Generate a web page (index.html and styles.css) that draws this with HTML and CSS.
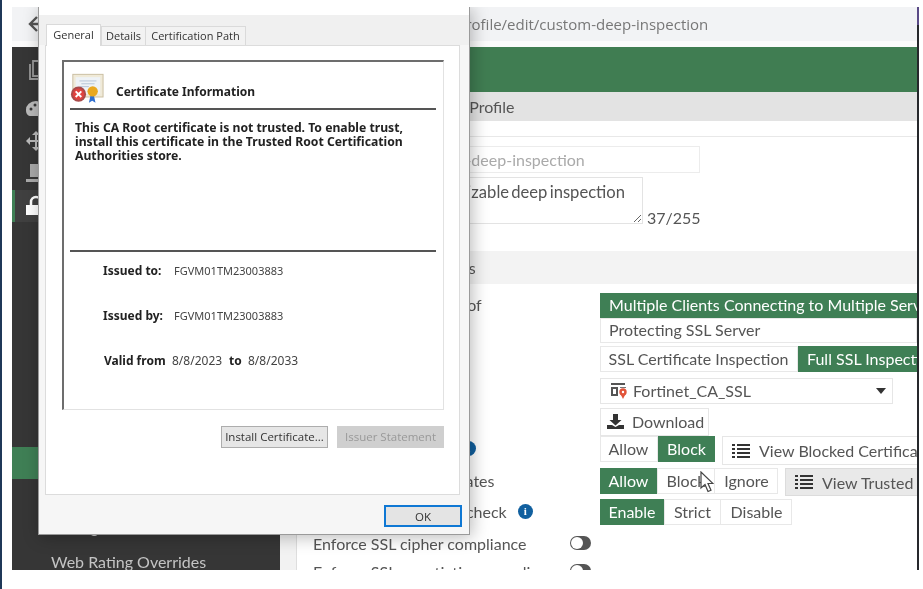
FILE: index.html
```html
<!DOCTYPE html>
<html lang="en">
<head>
<meta charset="utf-8">
<title>Edit SSL/SSH Inspection Profile</title>
<link rel="stylesheet" href="styles.css">
</head>
<body>
<div class="navy"></div>
<div class="frame">
  <div class="app">
    <header class="topbar">
      <svg class="back" viewBox="0 0 14 16" width="14" height="16"><path d="M9 1 2 8l7 7M3 8h11" fill="none" stroke="#555" stroke-width="2.4"/></svg>
      <span class="url">ssl-ssh-profile/edit/custom-deep-inspection</span>
    </header>
    <div class="columns">
      <nav class="sidebar">
        <div class="nav-row nav-first"><svg viewBox="0 0 22 24" width="22" height="24"><path d="M8 2h8v15H8z M5 5v15h8" fill="none" stroke="#999" stroke-width="1.800"/></svg><span>Network</span></div>
        <div class="nav-row"><svg viewBox="0 0 22 20" width="22" height="20"><path d="M11 2a10 8.500 0 0 0-10 9c0 4 2 6 5 6h10c3 0 5-2 5-6a10 8.500 0 0 0-10-9z" fill="#bbb"/><circle cx="6" cy="10" r="1.500" fill="#363636"/><circle cx="10" cy="6" r="1.500" fill="#363636"/></svg><span>Dashboard</span></div>
        <div class="nav-row"><svg viewBox="0 0 22 22" width="22" height="22"><path d="M11 1l4 4h-3v5h5V7l4 4-4 4v-3h-5v5h3l-4 4-4-4h3v-5H5v3l-4-4 4-4v3h5V5H7z" fill="#bbb"/></svg><span>Policy &amp; Objects</span></div>
        <div class="nav-row"><svg viewBox="0 0 22 22" width="22" height="22"><path d="M5 2h15v13H5zM1 17h18v3H1z" fill="#aaa"/></svg><span>Log &amp; Report</span></div>
        <div class="nav-row nav-open"><svg viewBox="0 0 22 22" width="22" height="22"><path d="M1 10h20v10H1z" fill="#fff"/><path d="M6 10V7a5 5 0 0 1 10 0v3" fill="none" stroke="#fff" stroke-width="2.500"/></svg><span>Security Profiles</span></div>
        <div class="nav-row nav-sub"><span class="sub">AntiVirus</span></div>
        <div class="nav-row nav-sub"><span class="sub">Web Filter</span></div>
        <div class="nav-row nav-sub"><span class="sub">DNS Filter</span></div>
        <div class="nav-row nav-sub"><span class="sub">Application Control</span></div>
        <div class="nav-row nav-sub"><span class="sub">Intrusion Prevention</span></div>
        <div class="nav-row nav-sub"><span class="sub">File Filter</span></div>
        <div class="nav-row nav-sub"><span class="sub">Email Filter</span></div>
        <div class="nav-row nav-sub nav-active"><span class="sub">SSL/SSH Inspection</span></div>
        <div class="nav-row nav-sub"><span class="sub">Application Signatures</span></div>
        <div class="nav-row nav-sub nav-ips"><span class="sub">IPS Signatures</span></div>
        <div class="nav-row nav-sub nav-last"><span class="sub">Web Rating Overrides</span></div>
      </nav>
      <main class="main">
        <div class="greenbar"></div>
        <div class="pane">
          <h1 class="title">Edit SSL/SSH Inspection Profile</h1>
          <section class="identity">
            <div class="id-row"><label class="id-label">Name</label><input class="name-input" disabled value="custom-deep-inspection"></div>
            <div class="id-row id-row-comment"><label class="id-label id-label-comment">Comments</label><textarea class="comment-input" readonly>Customizable deep inspection</textarea><span class="counter">37/255</span></div>
          </section>
          <h2 class="section">SSL Inspection Options</h2>
          <section class="form">
            <div class="row row-mode">
              <div class="label label-mode">Enable SSL inspection of</div>
              <div class="stack">
                <div class="stack-item active">Multiple Clients Connecting to Multiple Servers</div>
                <div class="stack-item">Protecting SSL Server</div>
              </div>
            </div>
            <div class="row row-method">
              <div class="label">Inspection method</div>
              <div class="seg"><span class="opt w-cert">SSL Certificate Inspection</span><span class="opt active w-full">Full SSL Inspection</span></div>
            </div>
            <div class="row row-ca">
              <div class="label">CA certificate</div>
              <div class="select">
                <svg class="select-icon" viewBox="0 0 16 16" width="16" height="16"><path d="M0 0h14v2H0zM0 4h7v9H0z" fill="#555"/><path d="M2 6h3v5H2z" fill="#fff"/><path d="M9 4h6v1H9z" fill="#777"/><circle cx="12" cy="9" r="3.700" fill="#e2543a"/><path d="M9.500 11l2.500 5 2.500-5z" fill="#e2543a"/><circle cx="12" cy="9" r="1.200" fill="#fff"/></svg>
                <span class="select-text">Fortinet_CA_SSL</span>
                <span class="caret"></span>
              </div>
            </div>
            <div class="row row-download">
              <div class="label"></div>
              <div class="btn btn-download"><svg viewBox="0 0 17 15" width="17" height="15"><path d="M6 0h5v6h3.500L8.500 11.500 2.500 6H6z" fill="#333"/><path d="M0 11h5l3.500 2 3.500-2h5v4H0z" fill="#333"/></svg>Download</div>
            </div>
            <div class="row row-blocked">
              <div class="label">Blocked certificates <span class="info">i</span></div>
              <div class="controls">
                <div class="seg"><span class="opt w-allow">Allow</span><span class="opt active w-block">Block</span></div>
                <div class="btn btn-view btn-blocked"><svg viewBox="0 0 18 14" width="18" height="14"><path d="M0 0h3v2H0zM5 0h13v2H5zM0 4h3v2H0zM5 4h13v2H5zM0 8h3v2H0zM5 8h13v2H5zM0 12h3v2H0zM5 12h13v2H5z" fill="#333"/></svg>View Blocked Certificates</div>
              </div>
            </div>
            <div class="row row-untrusted">
              <div class="label">Untrusted SSL certificates</div>
              <div class="controls">
                <div class="seg"><span class="opt active w-allow">Allow</span><span class="opt w-block">Block</span><span class="opt w-ignore">Ignore</span></div>
                <div class="btn btn-view btn-trusted"><svg viewBox="0 0 18 14" width="18" height="14"><path d="M0 0h3v2H0zM5 0h13v2H5zM0 4h3v2H0zM5 4h13v2H5zM0 8h3v2H0zM5 8h13v2H5zM0 12h3v2H0zM5 12h13v2H5z" fill="#333"/></svg>View Trusted CAs List</div>
              </div>
            </div>
            <div class="row row-sni">
              <div class="label">Server certificate SNI check <span class="info">i</span></div>
              <div class="seg"><span class="opt active w-enable">Enable</span><span class="opt w-strict">Strict</span><span class="opt w-disable">Disable</span></div>
            </div>
            <div class="row-toggle row-cipher">
              <span>Enforce SSL cipher compliance</span><span class="toggle"></span>
            </div>
            <div class="row-toggle row-nego">
              <span>Enforce SSL negotiation compliance</span><span class="toggle"></span>
            </div>
          </section>
        </div>
      </main>
    </div>

    <svg class="cursor" viewBox="0 0 14 22" width="14" height="22"><path d="M1 1v16l4-3.500 3 7 3-1.300-3-6.700h5z" fill="#fff" stroke="#444" stroke-width="1.200"/></svg>

    <div class="dialog">
      <div class="tabs">
        <span class="tab tab-on">General</span>
        <span class="tab tab-details">Details</span>
        <span class="tab tab-path">Certification Path</span>
      </div>
      <div class="sheet">
        <div class="box">
          <div class="cert-head">
            <svg class="cert-icon" viewBox="0 0 36 32" width="34" height="31">
              <rect x="3" y="1" width="32" height="24" fill="#f0ead8" stroke="#c9bda0"/>
              <rect x="6" y="4" width="26" height="18" fill="#eef2f6"/>
              <path d="M10 8h18M12 11h14M10 14h10" stroke="#b5c4d6"/>
              <path d="M22 22l-2 9 3.500-2 3.500 2-2-9z" fill="#2f6fd0"/>
              <circle cx="24" cy="19" r="5.500" fill="#e9a820"/>
              <circle cx="9" cy="22" r="8" fill="#a94a4a"/>
              <circle cx="9" cy="22" r="6" fill="#e0433f"/>
              <path d="M6 19l6 6M12 19l-6 6" stroke="#fff" stroke-width="2"/>
            </svg>
            <span class="cert-title">Certificate Information</span>
          </div>
          <div class="cert-msg">This CA Root certificate is not trusted. To enable trust, install this certificate in the Trusted Root Certification Authorities store.</div>
          <div class="cert-details">
            <div class="detail detail-to"><b class="detail-key">Issued to:</b><span>FGVM01TM23003883</span></div>
            <div class="detail detail-by"><b class="detail-key">Issued by:</b><span>FGVM01TM23003883</span></div>
            <div class="detail detail-valid"><b class="valid-from">Valid from</b><span class="valid-date">8/8/2023</span><b class="valid-to">to</b><span class="valid-end">8/8/2033</span></div>
          </div>
        </div>
        <div class="sheet-actions">
          <span class="win-btn">Install Certificate...</span>
          <span class="win-btn win-disabled">Issuer Statement</span>
        </div>
      </div>
      <div class="dialog-foot"><span class="win-btn win-ok">OK</span></div>
    </div>
  </div>
  <div class="edge"><div class="edge-top"></div></div>
</div>
</body>
</html>
```

FILE: styles.css
```css
* { box-sizing: border-box; }
html, body { margin: 0; height: 589px; overflow: hidden; background: #fff; }
body { display: flex; font-family: "Lato", "Liberation Sans", sans-serif; color: #555; }

.navy { width: 2px; height: 589px; background: #1f3858; margin-right: 10px; flex: none; }
.frame { display: flex; margin-top: 7px; height: 563px; width: 907px; flex: none; }
.edge { width: 2px; background: #26282c; flex: none; }
.edge-top { height: 18px; background: #5a4a86; }

.app { position: relative; width: 905px; height: 563px; overflow: hidden; filter: blur(0.45px); display: flex; flex-direction: column; background: #fff; }

.topbar { height: 40px; flex: none; background: linear-gradient(#f2f3f5 0 34px, #fbfbfb 34px); display: flex; align-items: center; padding: 0 0 6px 16px; }
.back { flex: none; }
.url { margin-left: 363px; font-family: "Open Sans", sans-serif; font-size: 15px; color: #777; white-space: nowrap; }

.columns { flex: 1; display: flex; min-height: 0; }
.sidebar { width: 268px; flex: none; background: #363636; color: #c4c4c4; font-size: 16px; overflow: hidden; }
.nav-row { height: 32.4px; display: flex; align-items: center; padding-left: 13px; gap: 12px; white-space: nowrap; }
.nav-row svg { flex: none; }
.nav-first { margin-bottom: 6px; margin-top: 7px; align-items: flex-start; padding-top: 5px; }
.nav-open { background: #404040; box-shadow: inset 3px 0 0 #3f7f55; color: #fff; }
.nav-sub { height: 32.2px; }
.nav-active { background: #3f7f55; color: #fff; }
.nav-ips { height: 30px; }
.nav-last { margin-top: 4px; }
.sub { padding-left: 26px; }

.main { flex: 1; min-width: 0; overflow: hidden; background: #f2f2f2; }
.greenbar { height: 45px; background: #407d52; }
.pane { margin-left: 16px; height: 478px; background: #fff; border-left: 1px solid #dedede; overflow: hidden; }
.title { margin: 0 0 0 -1px; height: 29px; background: #e3e3e3; font: 400 16px/29px "Lato", sans-serif; color: #555; white-space: nowrap; text-indent: -2px; }

.identity { margin-top: 15px; border-top: 1px solid #e8e8e8; padding: 9px 0 0 16px; height: 115px; }
.id-row { display: flex; align-items: center; height: 27px; }
.id-row-comment { margin-top: 4px; height: 47px; align-items: flex-start; }
.id-label { width: 97px; font-size: 16px; flex: none; line-height: 27px; }
.id-label-comment { width: 87px; }
.name-input { width: 290px; height: 27px; border: 1px solid #ececec; background: #fff; font: 16px "Lato", sans-serif; color: #aaa; padding: 0 3px; outline: 0; }
.comment-input { width: 243px; height: 47px; border: 1px solid #e3e3e3; font: 16.600px/20px "Lato", sans-serif; word-spacing: -2px; color: #555; padding: 4px 4px 4px 10px; outline: 0; margin: 0; overflow: hidden; }
.counter { margin-left: 4px; font-size: 16px; line-height: 20px; margin-top: 31px; }

.section { margin: 0; height: 33px; background: #f3f3f3; font: 400 16px/33px "Lato", sans-serif; color: #555; padding-left: 16px; white-space: nowrap; }

.form { padding: 9px 0 0 16px; }
.row { display: grid; grid-template-columns: 287px minmax(0, 1fr); font-size: 16px; }
.label { display: flex; align-items: center; gap: 11px; white-space: nowrap; padding-bottom: 2px; }
.label-mode { height: 25px; letter-spacing: -.12px; }
.row-mode { height: 50px; }
.row-method { margin-top: 3px; height: 26px; }
.row-ca { margin-top: 6px; height: 26px; }
.row-download { margin-top: 4px; height: 28px; }
.row-blocked { height: 29px; }
.row-blocked .label { height: 26px; }
.row-untrusted { margin-top: 3px; height: 28px; }
.row-untrusted .label { height: 26px; }
.row-sni { margin-top: 3px; height: 26px; }

.info { width: 15px; height: 15px; border-radius: 50%; background: #11609f; color: #fff; font: 700 11px/15px "Liberation Serif", serif; text-align: center; flex: none; }

.stack { min-width: 0; }
.stack-item { height: 25px; line-height: 22px; padding-left: 8px; border: 1px solid #e8e8e8; white-space: nowrap; }
.stack-item.active { background: #3f7f55; color: #fff; border-color: #3f7f55; }

.seg { display: flex; height: 26px; width: max-content; white-space: nowrap; border: 1px solid #e8e8e8; }
.opt { display: flex; align-items: center; justify-content: center; flex: none; border-right: 1px solid #e8e8e8; margin: -1px 0; padding-bottom: 2px; }
.opt:first-child { margin-left: -1px; }
.opt:last-child { border-right: 0; margin-right: -1px; }
.opt.active { background: #3f7f55; color: #fff; }
.w-cert { width: 198px; }
.w-full { width: 140px; justify-content: flex-start; padding-left: 9px; }
.w-allow { width: 58px; }
.w-block { width: 57px; }
.w-ignore { width: 63px; }
.w-enable { width: 65px; }
.w-strict { width: 56px; }
.w-disable { width: 71px; }

.controls { display: flex; gap: 7px; white-space: nowrap; }
.select { width: 293px; height: 26px; border: 1px solid #e6e6e6; display: flex; align-items: center; padding: 0 6px 0 10px; gap: 6px; }
.select-icon { flex: none; }
.select-text { flex: 1; padding-bottom: 2px; }
.caret { width: 0; height: 0; border: 5px solid transparent; border-top: 6px solid #333; border-bottom: 0; }
.btn { display: flex; align-items: center; flex: none; border: 1px solid #e6e6e6; height: 28px; white-space: nowrap; }
.btn svg { flex: none; }
.btn-download { width: 109px; padding: 0 0 2px 6px; gap: 8px; }
.btn-view { padding-left: 9px; gap: 9px; }
.btn-blocked { height: 29px; width: 240px; }
.btn-trusted { height: 28px; width: 200px; background: #e9e9e9; border-color: #dcdcdc; }

.row-toggle { display: flex; align-items: center; font-size: 16px; height: 20px; }
.row-toggle span:first-child { width: 257px; white-space: nowrap; flex: none; }
.row-cipher { margin-top: 8px; }
.row-nego { margin-top: 8px; }
.toggle { width: 21px; height: 14px; border-radius: 7px; background: #555; position: relative; flex: none; }
.toggle::before { content: ""; position: absolute; left: 1px; top: 1px; width: 12px; height: 12px; border-radius: 50%; background: #fff; }

.cursor { position: absolute; left: 688px; top: 464px; }

.dialog { position: absolute; left: 26px; top: 0; width: 432px; height: 528px; background: #f6f6f6; border: 1px solid #9a9a9a; border-top: 0; box-shadow: 2px 2px 16px rgba(0,0,0,.28); font-family: "Open Sans", sans-serif; font-size: 12px; color: #333; }
.tabs { display: flex; align-items: flex-end; height: 38px; padding-left: 7px; background: linear-gradient(#fff 0 8px, #f0f0f0 8px); }
.tab { height: 19px; line-height: 17px; background: #f2f2f2; border: 1px solid #dadada; border-bottom: 0; text-align: center; margin-left: -1px; white-space: nowrap; font-size: 11px; }
.tab-on { height: 22px; width: 55px; background: #fff; line-height: 19px; margin-left: 0; position: relative; top: 1px; }
.tab-details { width: 45px; margin-left: 0; }
.tab-path { width: 101px; }
.sheet { margin: 0 9px 0 6px; height: 450px; background: #fff; border: 1px solid #dcdcdc; padding: 14px 15px 0 16px; }
.box { height: 350px; border: 2px solid #6d6d6d; border-right: 1px solid #e2e2e2; border-bottom: 1px solid #e2e2e2; padding: 0 7px 0 6px; }
.cert-head { height: 48px; border-bottom: 2px solid #555; display: flex; align-items: flex-start; padding-top: 11px; }
.cert-icon { flex: none; }
.cert-title { margin-left: 12px; margin-top: 11px; font: 700 12px/16px "Noto Sans", sans-serif; color: #222; }
.cert-msg { height: 142px; border-bottom: 2px solid #555; padding: 11px 20px 0 5px; font: 700 12.200px/14px "Noto Sans", sans-serif; color: #222; }
.cert-details { padding-top: 11px; }
.detail { display: flex; height: 45px; font: 11px/16px "Noto Sans", sans-serif; color: #444; padding-left: 33px; }
.detail b { color: #222; font-size: 12px; }
.detail-key { width: 71px; flex: none; }
.detail-valid { padding-left: 34px; }
.valid-from { width: 68px; flex: none; }
.valid-date { width: 57px; flex: none; font-size: 12px; }
.valid-to { width: 19px; flex: none; }
.valid-end { font-size: 12px; }
.sheet-actions { display: flex; justify-content: flex-end; gap: 9px; padding-top: 16px; }
.win-btn { width: 107px; height: 22px; border: 1px solid #adadad; background: #e6e6e6; font-size: 11.500px; line-height: 20px; text-align: center; color: #333; white-space: nowrap; }
.win-disabled { background: #cfcfcf; border-color: #cfcfcf; color: #999; }
.dialog-foot { display: flex; justify-content: flex-end; padding: 10px 7px 0 0; }
.win-ok { width: 78px; height: 22px; border: 2px solid #0f78d4; background: #e4e4e4; line-height: 19px; }
```
